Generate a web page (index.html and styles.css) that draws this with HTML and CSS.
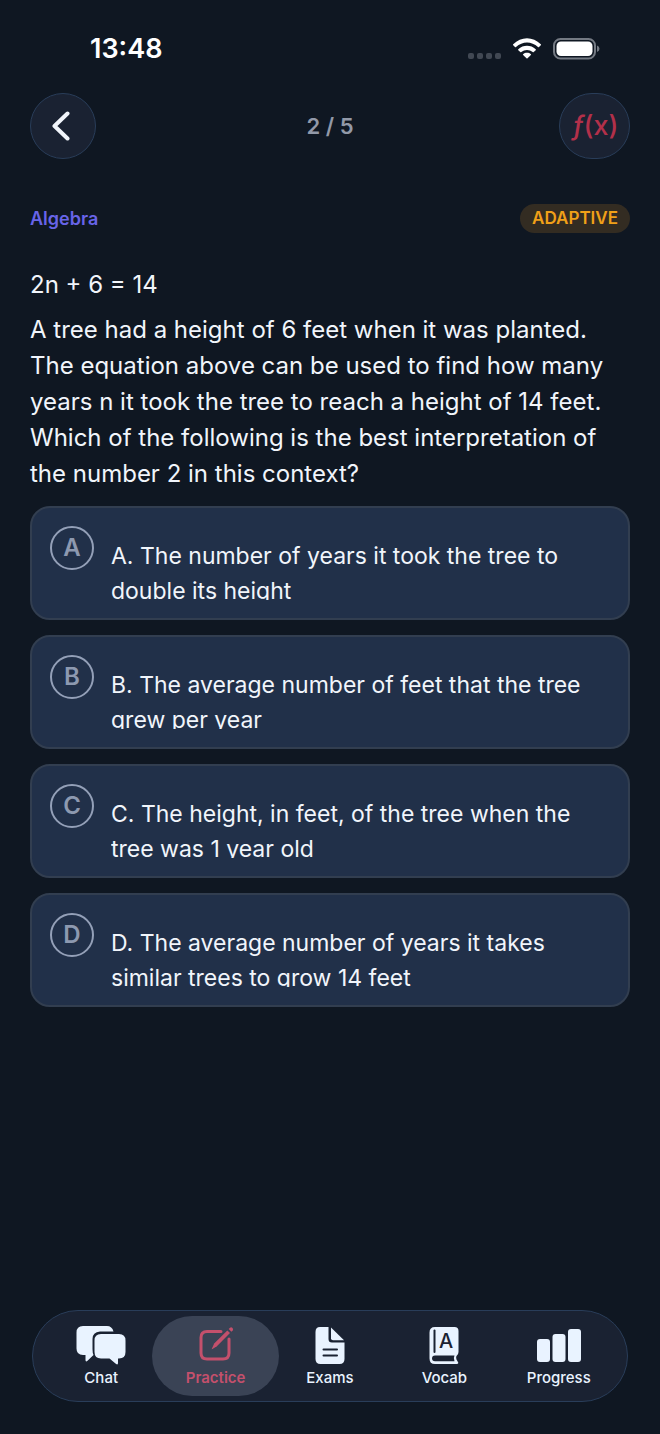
FILE: index.html
```html
<!DOCTYPE html>
<html lang="en">
<head>
    <meta charset="UTF-8">
    <meta name="viewport" content="width=device-width, initial-scale=1">
    <title>Practice</title>
    <link rel="stylesheet" href="styles.css">
</head>
<body>

    <div class="status-bar">
        <span class="time">13:48</span>
        <div class="status-icons">
            <svg class="signal" width="34" height="22" viewBox="0 0 34 22">
                <rect x="0" y="15" width="6" height="6" rx="2" />
                <rect x="9" y="15" width="6" height="6" rx="2" />
                <rect x="18" y="15" width="6" height="6" rx="2" />
                <rect x="27" y="15" width="6" height="6" rx="2" />
            </svg>
            <svg class="wifi" width="30" height="22" viewBox="0 0 30 22">
                <path d="M1.2 6.2 C9 -1.8 21 -1.8 28.8 6.2 Q29.3 6.7 28.8 7.2 L27 9 Q26.5 9.4 26 9 C19.5 2.9 10.5 2.9 4 9 Q3.5 9.4 3 9 L1.2 7.2 Q.7 6.7 1.2 6.2 Z" />
                <path d="M6.3 11.2 C11.2 6.6 18.8 6.6 23.7 11.2 Q24.2 11.7 23.7 12.2 L21.7 14 Q21.2 14.4 20.7 14 C17.4 11.2 12.6 11.2 9.3 14 Q8.8 14.4 8.3 14 L6.3 12.2 Q5.8 11.7 6.3 11.2 Z" />
                <path d="M11.1 16.2 C13.3 14.4 16.7 14.4 18.9 16.2 Q19.3 16.7 18.9 17.1 L15.5 20.3 Q15 20.7 14.5 20.3 L11.1 17.1 Q10.7 16.7 11.1 16.2 Z" />
            </svg>
            <svg class="battery" width="47" height="22" viewBox="0 0 47 22">
                <rect class="battery-case" x="1" y="1" width="41" height="19.5" rx="6.5" />
                <rect x="3.5" y="3.5" width="36" height="14.5" rx="4.5" />
                <path class="battery-tip" d="M44 7.5 Q46.5 8.5 46.5 10.8 Q46.5 13 44 14 Z" />
            </svg>
        </div>
    </div>

    <header class="header">
        <button type="button" class="round-button" aria-label="Back">
            <svg width="18" height="30" viewBox="0 0 18 30">
                <path class="chevron" d="M15.5 2.5 L2.5 15 L15.5 27.5" />
            </svg>
        </button>
        <span class="counter">2 / 5</span>
        <button type="button" class="round-button formulas" aria-label="Formulas"><i>ƒ</i>(x)</button>
    </header>

    <main class="question">
        <div class="meta">
            <span class="topic">Algebra</span>
            <span class="badge">ADAPTIVE</span>
        </div>

        <p class="equation">2n + 6 = 14</p>
        <p class="prompt">A tree had a height of 6 feet when it was planted. The equation above can be used to find how many years n it took the tree to reach a height of 14 feet. Which of the following is the best interpretation of the number 2 in this context?</p>

        <div class="answers">
            <button type="button" class="answer">
                <span class="letter">A</span>
                <span class="answer-text">A. The number of years it took the tree to double its height</span>
            </button>
            <button type="button" class="answer">
                <span class="letter">B</span>
                <span class="answer-text">B. The average number of feet that the tree grew per year</span>
            </button>
            <button type="button" class="answer">
                <span class="letter">C</span>
                <span class="answer-text">C. The height, in feet, of the tree when the tree was 1 year old</span>
            </button>
            <button type="button" class="answer">
                <span class="letter">D</span>
                <span class="answer-text">D. The average number of years it takes similar trees to grow 14 feet</span>
            </button>
        </div>
    </main>

    <nav class="tab-bar">
        <a href="#chat" class="tab">
            <svg width="50" height="40" viewBox="0 0 50 40">
                <path d="M7 1 H31 Q36 1 37.5 6.5 H24 Q16.5 7 16.5 14 V24 Q16.5 28 17.5 30 L11.5 35.8 Q9.5 37.5 9.5 35 V30 H7 Q.5 30 .5 23.5 V7.5 Q.5 1 7 1 Z" />
                <path d="M25 9 H43 Q49.5 9 49.5 15.5 V27 Q49.5 33.5 43 33.5 H42 V38 Q42 40.5 39.8 38.8 L33.5 33.5 H25 Q18.5 33.5 18.5 27 V15.5 Q18.5 9 25 9 Z" />
            </svg>
            Chat
        </a>
        <a href="#practice" class="tab active" aria-current="page">
            <svg width="36" height="40" viewBox="0 0 36 40">
                <path class="outline" d="M23 6.5 H9 Q3 6.5 3 12.5 V28 Q3 34 9 34 H25 Q31 34 31 28 V14" />
                <path d="M13.8 23.7 L16.2 18.5 L29.3 5.4 L32 8.1 L18.9 21.2 L14.4 24.1 Q13.5 24.5 13.8 23.7 Z" />
                <path d="M30.7 4 L32 2.7 Q33.3 1.8 34.5 2.9 Q35.6 4.2 34.7 5.4 L33.4 6.7 Z" />
            </svg>
            Practice
        </a>
        <a href="#exams" class="tab">
            <svg width="30" height="40" viewBox="0 0 30 40">
                <path d="M5 2 H13.5 V14 Q13.5 17.5 17 17.5 H29.5 V34 Q29.5 39 24.5 39 H5.5 Q.5 39 .5 34 V7 Q.5 2 5 2 Z" />
                <path d="M16 2.5 L29 15.3 H18 Q16 15.3 16 13.3 Z" />
                <path class="cut" d="M8.5 24.5 H22 M8.5 30.5 H22" />
            </svg>
            Exams
        </a>
        <a href="#vocab" class="tab">
            <svg width="30" height="40" viewBox="0 0 30 40">
                <path d="M6 2 H25.5 Q29.5 2 29.5 6 V27 Q29.5 29.5 27.5 31 Q26.5 33.5 28.5 36.3 Q30.5 39 27.5 39 H6 Q.5 39 .5 33.5 V7.5 Q.5 2 6 2 Z" />
                <path class="shade" d="M6 30.5 H25.5 Q24 33.5 25.5 36.3 H6 Q3 36 3 33.5 Q3 30.5 6 30.5 Z" />
                <path class="cut" d="M5.5 5.5 V27" />
                <text class="book-letter" x="17" y="23">A</text>
            </svg>
            Vocab
        </a>
        <a href="#progress" class="tab">
            <svg width="44" height="40" viewBox="0 0 44 40">
                <rect x="0" y="14" width="13" height="23" rx="3" />
                <rect x="15.5" y="9" width="13" height="28" rx="3" />
                <rect x="31" y="4" width="13" height="33" rx="3" />
            </svg>
            Progress
        </a>
    </nav>

</body>
</html>
```

FILE: styles.css
```css
* {
    box-sizing: border-box;
}
body {
    display: flex;
    flex-direction: column;
    min-height: 100vh;
    margin: 0;
    padding: 0 30px 32px;
    background-color: #0f1722;
    color: #f1f5fb;
    font-family: Inter, "Liberation Sans", sans-serif;
}
button {
    margin: 0;
    color: inherit;
    font-family: inherit;
    cursor: pointer;
}
p {
    margin: 0;
}
svg {
    display: block;
    fill: currentColor;
}

.status-bar {
    display: flex;
    align-items: center;
    justify-content: space-between;
    padding: 32px 30px 0 60px;
    color: #fff;
}
.time {
    font-size: 27px;
    font-weight: 600;
    line-height: 34px;
}
.status-icons {
    display: flex;
    gap: 10px;
}
.signal {
    color: #414853;
}
.battery {
    margin-left: 1px;
}
.battery-case {
    fill: none;
    stroke: #747a83;
    stroke-width: 2;
}
.battery-tip {
    fill: #747a83;
}

.header {
    display: grid;
    grid-template-columns: 1fr auto 1fr;
    align-items: center;
    padding-top: 27px;
}
.round-button {
    display: flex;
    align-items: center;
    justify-content: center;
    width: 66px;
    height: 66px;
    padding: 0 4px 0 0;
    border: 1px solid #293d59;
    border-radius: 33px;
    background-color: #1a2232;
}
.chevron {
    fill: none;
    stroke: currentColor;
    stroke-width: 4;
    stroke-linecap: round;
    stroke-linejoin: round;
}
.formulas {
    justify-self: end;
    width: 71px;
    padding: 0 0 2px 2px;
    color: #b2304a;
    font-size: 27px;
    font-weight: 500;
}
.counter {
    color: #9299a8;
    font-size: 22px;
    font-weight: 600;
}

.meta {
    display: flex;
    align-items: center;
    justify-content: space-between;
    padding: 45px 0 34px;
}
.topic {
    color: #6864e8;
    font-size: 18px;
    font-weight: 600;
}
.badge {
    padding: 0 12px;
    border-radius: 15px;
    background-color: #332c22;
    color: #f0a018;
    font-size: 17px;
    font-weight: 600;
    line-height: 29px;
}
.equation,
.prompt {
    font-size: 24px;
    line-height: 36px;
}
.equation {
    padding-bottom: 9px;
}

.answers {
    display: grid;
    gap: 15px;
    padding: 14px 0 30px;
}
.answer {
    display: flex;
    gap: 17px;
    align-items: flex-start;
    width: 100%;
    padding: 18px;
    border: 2px solid #323e50;
    border-radius: 20px;
    background-color: #213049;
    text-align: left;
}
.letter {
    flex: none;
    width: 44px;
    border: 2px solid #94a0b8;
    border-radius: 50%;
    color: #8d99b0;
    font-size: 24px;
    font-weight: 600;
    line-height: 40px;
    text-align: center;
}
/* two lines, the rest is cut off */
.answer-text {
    flex: 1;
    height: 74px;
    padding-top: 13px;
    overflow: hidden;
    font-size: 23px;
    line-height: 35px;
}

.tab-bar {
    display: grid;
    grid-template-columns: repeat(5, 1fr);
    height: 92px;
    margin: auto 2px 0;
    padding: 5px 11px;
    border: 1px solid #293d59;
    border-radius: 46px;
    background-color: #1a2232;
}
.tab {
    display: flex;
    flex-direction: column;
    align-items: center;
    gap: 4px;
    margin: 0 -6px;
    padding-top: 9px;
    border-radius: 40px;
    color: #e9f3ff;
    font-size: 15px;
    font-weight: 500;
    line-height: 18px;
    text-decoration: none;
}
.tab.active {
    background-color: #3a4355;
    color: #c4506c;
    font-weight: 600;
}
.outline {
    fill: none;
    stroke: currentColor;
    stroke-width: 3;
    stroke-linecap: round;
}
.cut {
    fill: none;
    stroke: #1a2232;
    stroke-width: 2;
    stroke-linecap: round;
}
.shade,
.book-letter {
    fill: #1a2232;
}
.book-letter {
    font-size: 20px;
    font-weight: 500;
    text-anchor: middle;
}
```
